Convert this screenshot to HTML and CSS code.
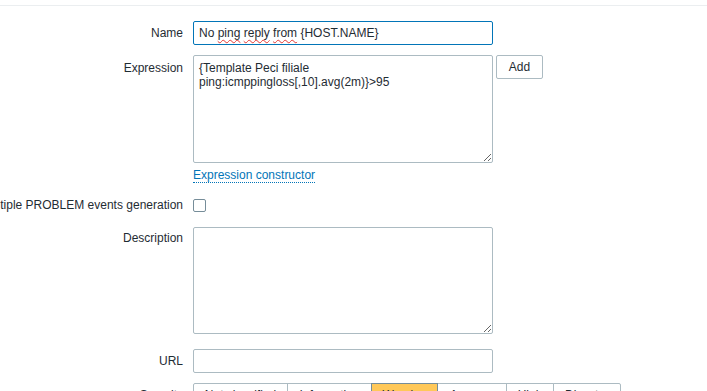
FILE: index.html
```html
<!DOCTYPE html>
<html>
<head>
    <title>Trigger</title>
    <link rel="stylesheet" href="styles.css">
</head>
<body>
    <div class="top-line"></div>
    <form class="trigger-form">
        <div class="form-row">
            <label class="form-label">Name</label>
            <div class="form-field">
                <div class="text-input focused">No <span class="misspelled">ping</span> <span class="misspelled">reply</span> <span class="misspelled">from</span> {HOST.NAME}</div>
            </div>
        </div>

        <div class="form-row">
            <label class="form-label label-top">Expression</label>
            <div class="form-field">
                <div class="inline-group">
                    <textarea class="textarea expression" readonly>{Template Peci filiale ping:icmppingloss[,10].avg(2m)}>95</textarea>
                    <button type="button" class="btn">Add</button>
                </div>
                <a href="#" class="link-action">Expression constructor</a>
            </div>
        </div>

        <div class="form-row row-check">
            <label class="form-label">Multiple PROBLEM events generation</label>
            <div class="form-field">
                <span class="checkbox"></span>
            </div>
        </div>

        <div class="form-row row-desc">
            <label class="form-label label-top label-desc">Description</label>
            <div class="form-field">
                <textarea class="textarea description" readonly></textarea>
            </div>
        </div>

        <div class="form-row">
            <label class="form-label">URL</label>
            <div class="form-field">
                <div class="text-input"></div>
            </div>
        </div>

        <div class="form-row">
            <label class="form-label">Severity</label>
            <div class="form-field">
                <ul class="severity">
                    <li style="width: 95px">Not classified</li>
                    <li style="width: 85px">Information</li>
                    <li class="selected" style="width: 67px">Warning</li>
                    <li style="width: 70px">Average</li>
                    <li style="width: 48px">High</li>
                    <li style="width: 68px">Disaster</li>
                </ul>
            </div>
        </div>
    </form>
</body>
</html>
```

FILE: styles.css
```css
body {
    font-family: Arial, "Liberation Sans", sans-serif;
    font-size: 12px;
    color: #1f2c33;
    background-color: #fff;
    margin: 0;
    overflow: hidden;
}

.top-line {
    height: 5px;
    border-bottom: 1px solid #ebeef0;
}

.trigger-form {
    padding-top: 15px;
}

.form-row {
    display: flex;
    gap: 10px;
    margin-bottom: 10px;
}

.form-label {
    width: 183px;
    flex: none;
    text-align: right;
    white-space: nowrap;
    line-height: 24px;
    display: flex;
    justify-content: flex-end;
}

.label-top {
    line-height: 14px;
    padding-top: 6px;
}

.label-desc {
    padding-top: 4px;
}

.form-field {
    flex: 1;
}

.text-input {
    box-sizing: border-box;
    width: 300px;
    height: 24px;
    padding: 0 5px;
    line-height: 22px;
    border: 1px solid #acbbc2;
    border-radius: 2px;
    background: #fff;
    white-space: nowrap;
}

.text-input.focused {
    border-color: #0275b8;
}

.misspelled {
    text-decoration: underline wavy #e33734;
    text-decoration-thickness: 1px;
    text-underline-offset: 2px;
}

.inline-group {
    display: flex;
    gap: 3px;
    align-items: flex-start;
}

.textarea {
    box-sizing: border-box;
    width: 300px;
    margin: 0;
    padding: 5px 5px;
    font-family: Arial, "Liberation Sans", sans-serif;
    font-size: 12px;
    line-height: 14px;
    color: #1f2c33;
    border: 1px solid #acbbc2;
    border-radius: 2px;
    outline: none;
    display: block;
}

.expression {
    height: 108px;
}

.description {
    height: 107px;
}

.btn {
    box-sizing: border-box;
    height: 24px;
    width: 47px;
    padding: 0;
    font-family: Arial, "Liberation Sans", sans-serif;
    font-size: 12px;
    color: #1f2c33;
    background: #fff;
    border: 1px solid #acbbc2;
    border-radius: 2px;
}

.link-action {
    display: inline-block;
    margin-top: 5px;
    line-height: 14px;
    color: #0275b8;
    text-decoration: none;
    border-bottom: 1px dotted #0275b8;
}

.row-check .form-field {
    display: flex;
    align-items: center;
}

.checkbox {
    box-sizing: border-box;
    width: 13px;
    height: 13px;
    border: 1px solid #768d99;
    border-radius: 2px;
    background: #fff;
}

.row-desc {
    margin-bottom: 15px;
}

.severity {
    display: flex;
    list-style: none;
    margin: 0;
    padding: 0;
}

.severity li {
    box-sizing: border-box;
    height: 24px;
    line-height: 22px;
    text-align: center;
    border: 1px solid #acbbc2;
    margin-left: -1px;
    background: #fff;
}

.severity li:first-child {
    margin-left: 0;
    border-radius: 2px 0 0 2px;
}

.severity li:last-child {
    border-radius: 0 2px 2px 0;
}

.severity li.selected {
    background: #ffc859;
    border-color: #768d99;
    position: relative;
}
```
